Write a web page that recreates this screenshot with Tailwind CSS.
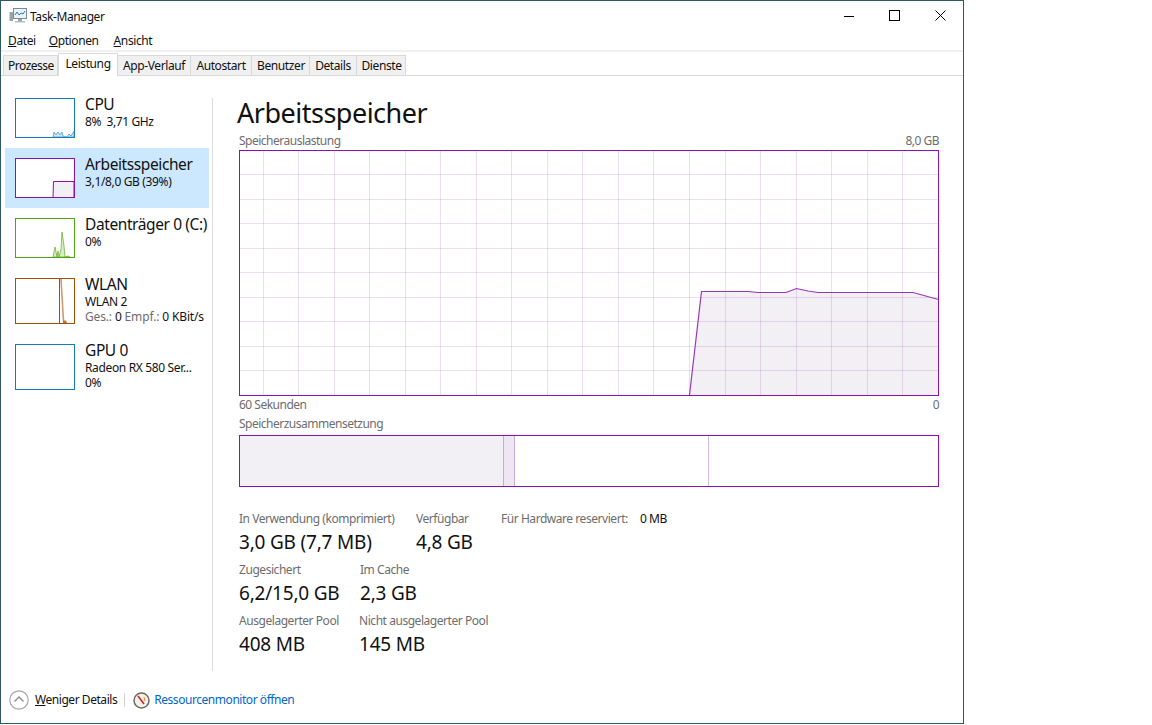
<!DOCTYPE html>
<html lang="de"><head><meta charset="utf-8"><script src="https://cdn.jsdelivr.net/npm/@tailwindcss/browser@4"></script></head>
<body class="bg-white">
<div class="w-[964px] h-[724px] flex flex-col border border-[#2b5a60] bg-white text-[12px] leading-4 text-[#111] font-['Noto_Sans',sans-serif] overflow-hidden">
  <div class="h-[30px] flex items-center shrink-0">
    <svg class="ml-[8px] w-[18px] h-[16px]" viewBox="0 0 18 16"><rect x="0.5" y="4" width="3.5" height="9" fill="#9aa5a8"/><rect x="4.5" y="0.5" width="13" height="10" fill="#eaf3fa" stroke="#7d8a90"/><path d="M6 7l2-3 2 3 2-2 2 1 2-3" fill="none" stroke="#2b7cc0"/><rect x="9" y="11" width="4" height="2" fill="#9aa5a8"/><rect x="6" y="13" width="10" height="1.5" fill="#b5bdc0"/></svg>
    <span class="ml-[3px] mt-[1px] tracking-[-0.4px]">Task-Manager</span>
    <div class="ml-auto flex items-center mr-[17px] gap-[35px] -mt-[1px]">
      <svg class="w-[10px] h-[10px]" viewBox="0 0 10 10"><path d="M0 5.500h10" stroke="#000"/></svg>
      <svg class="w-[11px] h-[11px]" viewBox="0 0 11 11"><rect x=".5" y=".5" width="10" height="10" fill="none" stroke="#000"/></svg>
      <svg class="w-[11px] h-[11px]" viewBox="0 0 11 11"><path d="M.5.5l10 10M10.500.5l-10 10" stroke="#000"/></svg>
    </div>
  </div>
  <div class="h-[19px] flex items-center shrink-0 pl-[7px] pt-[1px] tracking-[-0.4px]">
    <span><u>D</u>atei</span><span class="ml-[13px]"><u>O</u>ptionen</span><span class="ml-[15px]"><u>A</u>nsicht</span>
  </div>
  <div class="h-[2px] bg-[#f0f0f0] shrink-0"></div>
  <div class="h-[24px] flex items-end border-b border-[#d9d9d9] shrink-0 pl-[2px] tracking-[-0.4px]">
    <div class="w-[55px] h-[21px] -mb-px bg-[#f0f0f0] border border-[#d9d9d9] flex items-center justify-center tracking-[-0.5px] pl-[1px]">Prozesse</div>
    <div class="w-[60px] h-[23px] -mb-px bg-white border border-b-0 border-[#d9d9d9] flex items-center justify-center pb-[3px]">Leistung</div>
    <div class="w-[73px] h-[21px] -mb-px bg-[#f0f0f0] border border-l-0 border-[#d9d9d9] flex items-center justify-center">App-Verlauf</div>
    <div class="w-[61px] h-[21px] -mb-px bg-[#f0f0f0] border border-l-0 border-[#d9d9d9] flex items-center justify-center">Autostart</div>
    <div class="w-[58px] h-[21px] -mb-px bg-[#f0f0f0] border border-l-0 border-[#d9d9d9] flex items-center justify-center pl-[1px]">Benutzer</div>
    <div class="w-[47px] h-[21px] -mb-px bg-[#f0f0f0] border border-l-0 border-[#d9d9d9] flex items-center justify-center">Details</div>
    <div class="w-[49px] h-[21px] -mb-px bg-[#f0f0f0] border border-l-0 border-[#d9d9d9] flex items-center justify-center pl-[1px]">Dienste</div>
  </div>
  <div class="flex-1 flex min-h-0">
    <div class="w-[211px] shrink-0 pt-[12px] pl-[4px]">
      <div class="w-[204px] h-[60px] flex pl-[10px] pt-[10px]">
        <svg class="w-[60px] h-[40px] shrink-0" viewBox="0 0 60 40"><path d="M38 39L39 34L41 37L43 34L45 37L47 34L48 38L50 39L52 39L54 36L56 38L58 35L59 33V39z" fill="#d7e8f3" stroke="#4a9bc9" stroke-width=".8"/><rect x=".5" y=".5" width="59" height="39" fill="none" stroke="#117dbb"/></svg>
        <div class="ml-[10px] -mt-[4px]"><div class="text-[15.5px] leading-[20px] tracking-[-0.4px] whitespace-nowrap">CPU</div><div class="tracking-[-0.4px] leading-[15px] whitespace-nowrap">8%&nbsp; 3,71 GHz</div></div>
      </div>
      <div class="w-[204px] h-[60px] flex pl-[10px] pt-[10px] bg-[#cce8ff]">
        <svg class="w-[60px] h-[40px] shrink-0" viewBox="0 0 60 40"><rect width="60" height="40" fill="#fff"/><path d="M38 40l.5-16.500h20.500v16.500z" fill="#f1eef4" stroke="#8b12ae"/><rect x=".5" y=".5" width="59" height="39" fill="none" stroke="#8b12ae"/></svg>
        <div class="ml-[10px] -mt-[4px]"><div class="text-[15.5px] leading-[20px] tracking-[-0.4px] whitespace-nowrap">Arbeitsspeicher</div><div class="tracking-[-0.35px] leading-[15px] whitespace-nowrap">3,1/8,0 GB (39%)</div></div>
      </div>
      <div class="w-[204px] h-[60px] flex pl-[10px] pt-[10px]">
        <svg class="w-[60px] h-[40px] shrink-0" viewBox="0 0 60 40"><path d="M38 39l2-10 2 10 1-6 1 6 2-8 1-17 2 14 1 11 3-1 2 1z" fill="#dcedc8" stroke="#6fb33a" stroke-width=".8"/><rect x=".5" y=".5" width="59" height="39" fill="none" stroke="#4da60c"/></svg>
        <div class="ml-[10px] -mt-[4px]"><div class="text-[15.5px] leading-[20px] tracking-[-0.4px] whitespace-nowrap">Datenträger 0 (C:)</div><div class="tracking-[-0.35px] leading-[15px] whitespace-nowrap">0%</div></div>
      </div>
      <div class="w-[204px] h-[66px] flex pl-[10px] pt-[10px]">
        <svg class="w-[60px] h-[46px] shrink-0" viewBox="0 0 60 46"><path d="M46 1l2.500 42" fill="none" stroke="#cf9a6c" stroke-width="1.600"/><path d="M48 45v-2.500h3l1 2.500z" fill="#c9703a"/><path d="M44.500 1v44" stroke="#a74f01"/><rect x=".5" y=".5" width="59" height="45" fill="none" stroke="#a74f01"/></svg>
        <div class="ml-[10px] -mt-[4px]"><div class="text-[15.5px] leading-[20px] tracking-[-0.4px] whitespace-nowrap">WLAN</div><div class="tracking-[-0.35px] leading-[15px] whitespace-nowrap">WLAN 2</div><div class="tracking-[-0.15px] leading-[15px] whitespace-nowrap"><span class="text-[#6d6d6d]">Ges.:</span> 0 <span class="text-[#6d6d6d]">Empf.:</span> 0 KBit/s</div></div>
      </div>
      <div class="w-[204px] h-[66px] flex pl-[10px] pt-[10px]">
        <svg class="w-[60px] h-[46px] shrink-0" viewBox="0 0 60 46"><rect x=".5" y=".5" width="59" height="45" fill="none" stroke="#117dbb"/></svg>
        <div class="ml-[10px] -mt-[4px]"><div class="text-[15.5px] leading-[20px] tracking-[-0.4px] whitespace-nowrap">GPU 0</div><div class="tracking-[-0.35px] leading-[15px] whitespace-nowrap">Radeon RX 580 Ser...</div><div class="tracking-[-0.35px] leading-[15px] whitespace-nowrap">0%</div></div>
      </div>
    </div>
    <div class="w-px shrink-0 bg-[#dcdcdc] mt-[22px] mb-[5px]"></div>
    <div class="flex-1 pl-[24px] pt-[19px] min-w-0">
      <div class="text-[27px] leading-[36px] -tracking-[0.5px] text-[#111] whitespace-nowrap">Arbeitsspeicher</div>
      <div class="w-[700px] ml-[2px] text-[#6d6d6d] tracking-[-0.5px]">
        <div class="flex justify-between h-[15px] leading-[15px] mt-[2px] mb-[2px]"><span>Speicherauslastung</span><span>8,0 GB</span></div>
        <svg class="block w-[700px] h-[246px]" viewBox="0 0 700 246">
          <path d="M450.500 245L462.500 141.500H509L519 142.500H547L557.500 138.500L569 141L579 142.500H674L699.500 149.500V245Z" fill="#f3f0f5"/>
          <path d="M24.500 0v245M59.500 0v245M95.500 0v245M130.500 0v245M166.500 0v245M201.500 0v245M237.500 0v245M272.500 0v245M308.500 0v245M343.500 0v245M379.500 0v245M414.500 0v245M450.500 0v245M486.500 0v245M521.500 0v245M557.500 0v245M592.500 0v245M628.500 0v245M663.500 0v245M0 24.500h700M0 49.500h700M0 73.500h700M0 98.500h700M0 122.500h700M0 147.500h700M0 171.500h700M0 196.500h700M0 220.500h700" stroke="#7a2a9a" stroke-opacity=".15" fill="none"/>
          <path d="M450.500 245L462.500 141.500H509L519 142.500H547L557.500 138.500L569 141L579 142.500H674L699.500 149.500" fill="none" stroke="#9a35b8" stroke-width="1.200"/>
          <rect x=".5" y=".5" width="699" height="245" fill="none" stroke="#8b12ae"/>
        </svg>
        <div class="flex justify-between h-[18px] leading-[18px]"><span>60 Sekunden</span><span>0</span></div>
        <div class="h-[21px] leading-[20px]">Speicherzusammensetzung</div>
        <div class="h-[52px] border border-[#8b12ae] flex">
          <div class="w-[263px] bg-[#f3f0f5]"></div>
          <div class="w-[12px] bg-[#eee6f3] border-x border-[#c9aad8]"></div>
          <div class="w-[194px] border-r border-[#d6b8e2]"></div>
        </div>
      </div>
      <div class="ml-[2px] mt-[24px] text-[#6d6d6d] tracking-[-0.45px]">
        <div class="flex h-[51px]">
          <div class="w-[177px]"><div class="leading-[16px]">In Verwendung (komprimiert)</div><div class="text-[19px] leading-[30px] text-[#111] -tracking-[0.2px]">3,0 GB (7,7 MB)</div></div>
          <div class="w-[85px]"><div class="leading-[16px]">Verfügbar</div><div class="text-[19px] leading-[30px] text-[#111] -tracking-[0.2px]">4,8 GB</div></div>
          <div class="w-[139px]">Für Hardware reserviert:</div><div class="text-[#111]">0 MB</div>
        </div>
        <div class="flex h-[51px]">
          <div class="w-[121px]"><div class="leading-[16px]">Zugesichert</div><div class="text-[19px] leading-[30px] text-[#111] -tracking-[0.2px]">6,2/15,0 GB</div></div>
          <div><div class="leading-[16px]">Im Cache</div><div class="text-[19px] leading-[30px] text-[#111] -tracking-[0.2px]">2,3 GB</div></div>
        </div>
        <div class="flex h-[51px]">
          <div class="w-[120px]"><div class="leading-[16px]">Ausgelagerter Pool</div><div class="text-[19px] leading-[30px] text-[#111] -tracking-[0.2px]">408 MB</div></div>
          <div><div class="leading-[16px]">Nicht ausgelagerter Pool</div><div class="text-[19px] leading-[30px] text-[#111] -tracking-[0.2px]">145 MB</div></div>
        </div>
      </div>
    </div>
  </div>
  <div class="h-[47px] shrink-0 flex items-center pl-[8px] pt-[1px] tracking-[-0.45px]">
    <svg class="w-[20px] h-[20px]" viewBox="0 0 20 20"><circle cx="10" cy="10" r="9.200" fill="#fff" stroke="#a8a8a8" stroke-width="1.200"/><path d="M5.500 11.500L10 7l4.500 4.500" fill="none" stroke="#8c8c8c" stroke-width="1.400"/></svg>
    <span class="ml-[6px]"><u>W</u>eniger Details</span>
    <div class="w-px h-[14px] bg-[#cfcfcf] ml-[7px]"></div>
    <svg class="ml-[8px] w-[17px] h-[17px]" viewBox="0 0 17 17"><circle cx="8.500" cy="8.500" r="7.500" fill="#f5f2ec" stroke="#6b6b66" stroke-width="1.500"/><path d="M5 4l6 8" stroke="#c8281e" stroke-width="1.500"/><path d="M11 5l1 4" stroke="#e8862a"/></svg>
    <span class="ml-[4px] text-[#0066cc]">Ressourcenmonitor öffnen</span>
  </div>
</div>
</body></html>
